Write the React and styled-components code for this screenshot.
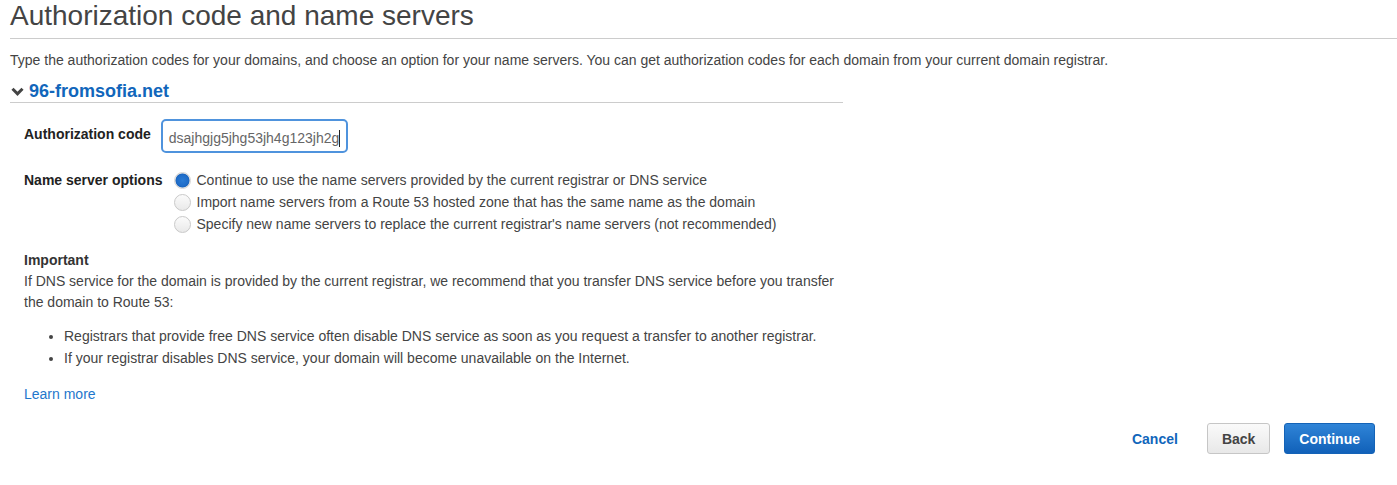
import React, { useState } from "react";
import styled, { createGlobalStyle } from "styled-components";

const GlobalStyle = createGlobalStyle`
  html, body {
    margin: 0;
    padding: 0;
    background: #fff;
  }
  body {
    font-family: "Liberation Sans", Arial, sans-serif;
    color: #444;
    font-size: 14px;
  }
  * {
    box-sizing: border-box;
  }
`;

const Page = styled.div`
  width: 1397px;
  padding: 0 0 0 10px;
`;
const Title = styled.h1`
  margin: 0;
  font-size: 28px;
  line-height: 32px;
  font-weight: 400;
  color: #444;
  padding-bottom: 6px;
  border-bottom: 1px solid #cccccc;
`;
const Intro = styled.p`
  margin: 11px 0 0;
  line-height: 20px;
  color: #444;
`;
const DomainHeader = styled.div`
  width: 833px;
  margin-top: 10px;
  display: flex;
  align-items: center;
  gap: 5px;
  height: 23px;
  border-bottom: 1px solid #cccccc;
  padding-bottom: 1px;
`;
const Chevron = styled.span`
  display: flex;
  width: 14px;
  justify-content: center;
  padding-top: 2px;
  color: #444;
`;
const DomainName = styled.span`
  font-size: 18px;
  line-height: 22px;
  font-weight: 700;
  color: #1166bb;
`;
const Body = styled.div`
  padding-left: 14px;
  width: 834px;
`;
const Row = styled.div`
  display: flex;
  align-items: flex-start;
  gap: ${({ $gap }) => $gap}px;
  margin-top: ${({ $top }) => $top}px;
`;
const Label = styled.div`
  font-weight: 700;
  line-height: ${({ $lh }) => $lh}px;
  padding-top: ${({ $pt }) => $pt || 0}px;
  color: #222;
`;
const Field = styled.div`
  width: 187px;
  height: 34px;
  border: 2px solid #4f93dd;
  border-radius: 5px;
  padding: 4px 6px 0;
  line-height: 26px;
  color: #666;
  white-space: nowrap;
  overflow: hidden;
`;
const Caret = styled.span`
  display: inline-block;
  width: 1px;
  height: 17px;
  background: #222;
  vertical-align: -4px;
`;
const Options = styled.div`
  display: flex;
  flex-direction: column;
`;
const Option = styled.label`
  display: flex;
  align-items: center;
  height: 22px;
  gap: 6px;
  color: #444;
  cursor: pointer;
`;
const Radio = styled.span`
  width: 17px;
  height: 17px;
  border-radius: 50%;
  flex-shrink: 0;
  border: 1px solid ${({ $on }) => ($on ? "#d6d6d6" : "#c9c9c9")};
  background: ${({ $on }) =>
    $on
      ? "radial-gradient(circle at 50% 50%, #2a7bd5 0, #1e6cc8 55%, #1a63bb 62%, #eaeaea 70%)"
      : "linear-gradient(#fbfbfb, #e9e9e9)"};
`;
const Section = styled.div`
  margin-top: ${({ $top }) => $top}px;
  line-height: 21px;
`;
const Strong = styled.div`
  font-weight: 700;
  color: #333;
`;
const Para = styled.p`
  margin: 0;
  width: 820px;
`;
const List = styled.ul`
  margin: 13px 0 0;
  padding-left: 40px;
  li {
    line-height: 21.5px;
  }
`;
const Link = styled.a`
  display: inline-block;
  margin-top: 15px;
  line-height: 21px;
  color: #1f77cc;
  text-decoration: none;
`;
const Actions = styled.div`
  display: flex;
  justify-content: flex-end;
  align-items: center;
  gap: 14px;
  margin-top: 18px;
  padding-right: 22px;
`;
const Button = styled.button`
  font-family: "Liberation Sans", Arial, sans-serif;
  font-size: 14px;
  font-weight: 700;
  line-height: 18px;
  height: 31px;
  padding: 0 14px;
  border-radius: 3px;
  cursor: pointer;
  border: 1px solid
    ${({ $kind }) =>
      $kind === "primary" ? "#1463b7" : $kind === "link" ? "transparent" : "#c6c6c6"};
  color: ${({ $kind }) =>
    $kind === "primary" ? "#fff" : $kind === "link" ? "#1166bb" : "#444"};
  background: ${({ $kind }) =>
    $kind === "primary"
      ? "linear-gradient(#2f84d7, #1161b9)"
      : $kind === "link"
      ? "transparent"
      : "linear-gradient(#fafafa, #e8e8e8)"};
`;

const options = [
  "Continue to use the name servers provided by the current registrar or DNS service",
  "Import name servers from a Route 53 hosted zone that has the same name as the domain",
  "Specify new name servers to replace the current registrar's name servers (not recommended)",
];

const App = () => {
  const [selected, setSelected] = useState(0);
  return (
    <>
      <GlobalStyle />
      <Page>
        <Title>Authorization code and name servers</Title>
        <Intro>
          Type the authorization codes for your domains, and choose an option for
          your name servers. You can get authorization codes for each domain from
          your current domain registrar.
        </Intro>
        <DomainHeader>
          <Chevron>
            <svg width="13" height="9" viewBox="0 0 13 9">
              <path
                d="M1.5 1.8 L6.5 6.8 L11.5 1.8"
                fill="none"
                stroke="currentColor"
                strokeWidth="3"
              />
            </svg>
          </Chevron>
          <DomainName>96-fromsofia.net</DomainName>
        </DomainHeader>
        <Body>
          <Row $gap={10} $top={16}>
            <Label $lh={20} $pt={5}>Authorization code</Label>
            <Field>
              dsajhgjg5jhg53jh4g123jh2g
              <Caret />
            </Field>
          </Row>
          <Row $gap={11} $top={16}>
            <Label $lh={22}>Name server options</Label>
            <Options>
              {options.map((o, i) => (
                <Option key={o} onClick={() => setSelected(i)}>
                  <Radio $on={selected === i} />
                  {o}
                </Option>
              ))}
            </Options>
          </Row>
          <Section $top={15}>
            <Strong>Important</Strong>
            <Para>
              If DNS service for the domain is provided by the current registrar,
              we recommend that you transfer DNS service before you transfer the
              domain to Route 53:
            </Para>
            <List>
              <li>
                Registrars that provide free DNS service often disable DNS service
                as soon as you request a transfer to another registrar.
              </li>
              <li>
                If your registrar disables DNS service, your domain will become
                unavailable on the Internet.
              </li>
            </List>
            <Link href="#">Learn more</Link>
          </Section>
        </Body>
        <Actions>
          <Button $kind="link">Cancel</Button>
          <Button>Back</Button>
          <Button $kind="primary">Continue</Button>
        </Actions>
      </Page>
    </>
  );
};

export default App;
